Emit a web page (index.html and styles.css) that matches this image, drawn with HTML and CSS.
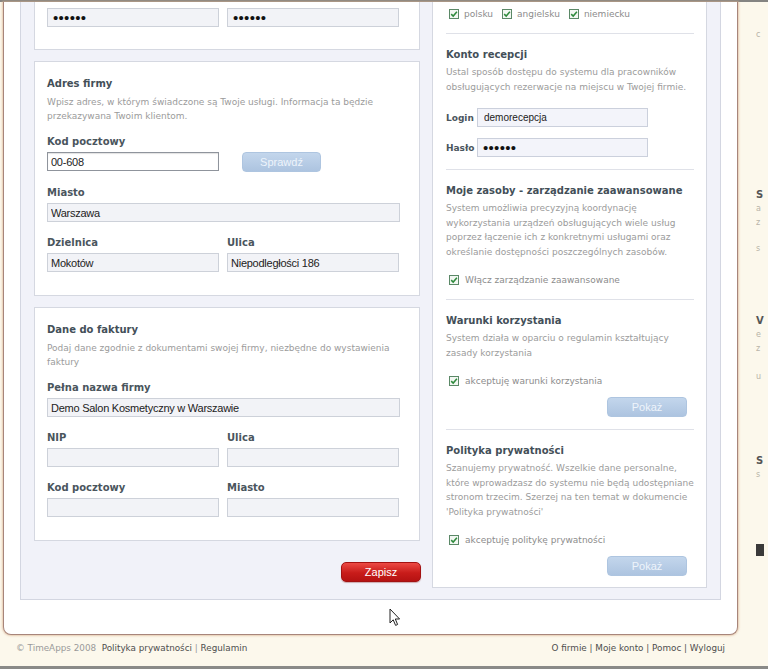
FILE: index.html
```html
<!DOCTYPE html>
<html lang="pl">
<head>
<meta charset="utf-8">
<title>TimeApps – Moje konto</title>
<link rel="stylesheet" href="styles.css">
</head>
<body>
<div class="topline"></div>
<div class="page">
  <div class="card">
    <div class="panel">
      <div class="col-left">
        <div class="sec sec-first">
          <div class="grid2">
            <input class="inp pw" type="password" value="123456">
            <input class="inp pw" type="password" value="123456">
          </div>
        </div>

        <div class="sec">
          <h3>Adres firmy</h3>
          <p class="desc">Wpisz adres, w którym świadczone są Twoje usługi. Informacja ta będzie<br>przekazywana Twoim klientom.</p>
          <div class="field first">
            <label>Kod pocztowy</label>
            <div class="grid2">
              <input class="inp active" type="text" value="00-608">
              <div><button class="btn-blue sprawdz" type="button">Sprawdź</button></div>
            </div>
          </div>
          <div class="field">
            <label>Miasto</label>
            <input class="inp" type="text" value="Warszawa">
          </div>
          <div class="field grid2">
            <div><label>Dzielnica</label><input class="inp" type="text" value="Mokotów"></div>
            <div><label>Ulica</label><input class="inp" type="text" value="Niepodległości 186"></div>
          </div>
        </div>

        <div class="sec">
          <h3>Dane do faktury</h3>
          <p class="desc">Podaj dane zgodnie z dokumentami swojej firmy, niezbędne do wystawienia<br>faktury</p>
          <div class="field first">
            <label>Pełna nazwa firmy</label>
            <input class="inp" type="text" value="Demo Salon Kosmetyczny w Warszawie">
          </div>
          <div class="field grid2">
            <div><label>NIP</label><input class="inp" type="text" value=""></div>
            <div><label>Ulica</label><input class="inp" type="text" value=""></div>
          </div>
          <div class="field grid2">
            <div><label>Kod pocztowy</label><input class="inp" type="text" value=""></div>
            <div><label>Miasto</label><input class="inp" type="text" value=""></div>
          </div>
        </div>

        <div class="actions">
          <button class="btn-red" type="button">Zapisz</button>
        </div>
      </div>

      <div class="col-right">
        <div class="langs">
          <span class="cb-item"><svg class="cb" viewBox="0 0 10 10" width="10" height="10"><rect x=".5" y=".5" width="9" height="9" fill="#f2f7f2" stroke="#5b8867"/><path d="M2.2 5.1 4.2 7.1 7.9 2.7" fill="none" stroke="#2d8a3b" stroke-width="1.5"/></svg>polsku</span>
          <span class="cb-item"><svg class="cb" viewBox="0 0 10 10" width="10" height="10"><rect x=".5" y=".5" width="9" height="9" fill="#f2f7f2" stroke="#5b8867"/><path d="M2.2 5.1 4.2 7.1 7.9 2.7" fill="none" stroke="#2d8a3b" stroke-width="1.5"/></svg>angielsku</span>
          <span class="cb-item"><svg class="cb" viewBox="0 0 10 10" width="10" height="10"><rect x=".5" y=".5" width="9" height="9" fill="#f2f7f2" stroke="#5b8867"/><path d="M2.2 5.1 4.2 7.1 7.9 2.7" fill="none" stroke="#2d8a3b" stroke-width="1.5"/></svg>niemiecku</span>
        </div>
        <div class="sep"></div>

        <h3 class="rh">Konto recepcji</h3>
        <p class="desc rdesc">Ustal sposób dostępu do systemu dla pracowników<br>obsługujących rezerwacje na miejscu w Twojej firmie.</p>
        <div class="login-row first">
          <label>Login</label>
          <input class="inp rinp" type="text" value="demorecepcja">
        </div>
        <div class="login-row">
          <label>Hasło</label>
          <input class="inp rinp pw" type="password" value="123456">
        </div>
        <div class="sep"></div>

        <h3 class="rh">Moje zasoby - zarządzanie zaawansowane</h3>
        <p class="desc rdesc">System umożliwia precyzyjną koordynację<br>wykorzystania urządzeń obsługujących wiele usług<br>poprzez łączenie ich z konkretnymi usługami oraz<br>określanie dostępności poszczególnych zasobów.</p>
        <div class="cb-row"><svg class="cb" viewBox="0 0 10 10" width="10" height="10"><rect x=".5" y=".5" width="9" height="9" fill="#f2f7f2" stroke="#5b8867"/><path d="M2.2 5.1 4.2 7.1 7.9 2.7" fill="none" stroke="#2d8a3b" stroke-width="1.5"/></svg>Włącz zarządzanie zaawansowane</div>
        <div class="sep"></div>

        <h3 class="rh">Warunki korzystania</h3>
        <p class="desc rdesc">System działa w oparciu o regulamin kształtujący<br>zasady korzystania</p>
        <div class="cb-row"><svg class="cb" viewBox="0 0 10 10" width="10" height="10"><rect x=".5" y=".5" width="9" height="9" fill="#f2f7f2" stroke="#5b8867"/><path d="M2.2 5.1 4.2 7.1 7.9 2.7" fill="none" stroke="#2d8a3b" stroke-width="1.5"/></svg>akceptuję warunki korzystania</div>
        <div class="btn-line"><button class="btn-blue pokaz" type="button">Pokaż</button></div>
        <div class="sep"></div>

        <h3 class="rh">Polityka prywatności</h3>
        <p class="desc rdesc">Szanujemy prywatność. Wszelkie dane personalne,<br>które wprowadzasz do systemu nie będą udostępniane<br>stronom trzecim. Szerzej na ten temat w dokumencie<br>'Polityka prywatności'</p>
        <div class="cb-row"><svg class="cb" viewBox="0 0 10 10" width="10" height="10"><rect x=".5" y=".5" width="9" height="9" fill="#f2f7f2" stroke="#5b8867"/><path d="M2.2 5.1 4.2 7.1 7.9 2.7" fill="none" stroke="#2d8a3b" stroke-width="1.5"/></svg>akceptuję politykę prywatności</div>
        <div class="btn-line"><button class="btn-blue pokaz" type="button">Pokaż</button></div>
      </div>
    </div>
  </div>

  <div class="side">
    <p class="s-txt s1">c</p>
    <p class="s-head s2">S</p>
    <p class="s-txt">a</p>
    <p class="s-txt">z</p>
    <p class="s-txt s3">s</p>
    <p class="s-head s4">V</p>
    <p class="s-txt">e</p>
    <p class="s-txt">z</p>
    <p class="s-txt s5">u</p>
    <p class="s-head s6">S</p>
    <p class="s-txt">s</p>
    <div class="s-block"></div>
  </div>
</div>

<footer class="footer">
  <div class="f-left">© TimeApps 2008 &nbsp;<a href="#">Polityka prywatności</a> | <a href="#">Regulamin</a></div>
  <div class="f-right"><a href="#">O firmie</a> | <a href="#">Moje konto</a> | <a href="#">Pomoc</a> | <a href="#">Wyloguj</a></div>
</footer>

<svg class="cursor" width="12" height="19" viewBox="0 0 12 19"><path d="M1 1 L1 15 L4.2 11.8 L6.6 17.4 L8.6 16.5 L6.3 11 L10.6 11 Z" fill="#fff" stroke="#222" stroke-width="1" stroke-linejoin="round"/></svg>
</body>
</html>
```
FILE: styles.css
```css
* { box-sizing: border-box; margin: 0; padding: 0; }

html, body { width: 768px; height: 669px; }

body {
  position: relative;
  overflow: hidden;
  background: #fcf8ec;
  font-family: "DejaVu Sans", Verdana, sans-serif;
  color: #4a545c;
}

.topline { height: 2px; background: #848482; }

.page { display: flex; align-items: flex-start; height: 633px; }

.card {
  flex: none;
  margin-left: 3px;
  width: 735px;
  background: #fff;
  border: 1px solid #a7857b;
  border-top: none;
  border-radius: 0 0 8px 8px;
  padding: 0 16px 34px 16px;
  box-shadow: 0 0 2px 1px rgba(215, 172, 136, 0.6);
}

.panel {
  display: flex;
  align-items: flex-start;
  gap: 12px;
  background: #f1f2f9;
  border: 1px solid #d3d6e1;
  border-top: none;
  padding: 0 13px 11px 13px;
}

/* ---------- left column ---------- */
.col-left { width: 386px; flex: none; display: flex; flex-direction: column; }

.sec {
  background: #fff;
  border: 1px solid #d5d8e1;
  padding: 14px 19px 23px 12px;
  margin-top: 11px;
}
.sec-first { border-top: none; margin-top: 0; padding-top: 6px; padding-bottom: 22px; }

h3 {
  font-size: 10px;
  line-height: 16px;
  font-weight: bold;
  color: #434f58;
}

.desc {
  margin-top: 3px;
  font-size: 9px;
  line-height: 14px;
  color: #9b9b9b;
  white-space: nowrap;
}

.grid2 { display: grid; grid-template-columns: 172px 172px; column-gap: 8px; }

.field { margin-top: 13px; }
.field.first { margin-top: 11px; }

label {
  display: block;
  font-size: 10px;
  line-height: 16px;
  font-weight: bold;
  color: #4a555d;
  margin-bottom: 2px;
}

.inp {
  display: block;
  width: 100%;
  height: 19px;
  border: 1px solid #cdd1d9;
  background: #f2f3f7;
  font-family: "Liberation Sans", Arial, sans-serif;
  font-size: 11px;
  letter-spacing: -0.25px;
  color: #222;
  padding: 0 3px;
  outline: none;
}
.inp.active {
  background: #fff;
  border-color: #8f949c;
  box-shadow: inset 0 1px 1px rgba(0, 0, 0, 0.12);
}
.inp.pw { font-size: 15px; color: #111; padding-left: 5px; letter-spacing: 0.3px; }

.btn-blue {
  display: block;
  width: 80px;
  height: 20px;
  border: 1px solid #aec5e0;
  border-radius: 4px;
  background: linear-gradient(#c3d6ec, #adc4e0);
  color: #eef4fb;
  font-family: "Liberation Sans", Arial, sans-serif;
  font-size: 11px;
}
.sprawdz { margin-left: 15px; width: 79px; }

.actions { display: flex; justify-content: flex-end; margin-top: 21px; margin-right: -1px; }

.btn-red {
  width: 80px;
  height: 20px;
  border: 1px solid #a31212;
  border-radius: 5px;
  background: linear-gradient(#ec4a44, #c81c1a 55%, #b51212);
  color: #fff;
  font-family: "Liberation Sans", Arial, sans-serif;
  font-size: 11px;
  box-shadow: 0 1px 1px rgba(120, 0, 0, 0.3);
}

/* ---------- right column ---------- */
.col-right {
  width: 275px;
  flex: none;
  background: #fff;
  border: 1px solid #d5d8e1;
  border-top: none;
  padding: 5px 12px 11px 13px;
}

.langs {
  display: flex;
  gap: 9px;
  height: 14px;
  margin-left: 3px;
  align-items: center;
}
.cb-item, .cb-row {
  display: flex;
  align-items: center;
  gap: 5px;
  font-size: 9px;
  color: #8c8c8c;
  white-space: nowrap;
}
.cb { flex: none; display: block; }

.cb-row { height: 14px; margin: 14px 0 0 3px; gap: 6px; }

.sep { height: 1px; background: #dfe1e8; margin-top: 12px; }

.rh { margin-top: 13px; }
.rdesc { margin-top: 2px; line-height: 14.5px; }

.login-row { display: flex; align-items: center; margin-top: 11px; }
.login-row.first { margin-top: 14px; }
.login-row label { width: 31px; margin: 0; flex: none; font-size: 9px; }
.rinp {
  width: 171px;
  background: #f3f4fa;
  border-color: #cbd0dc;
  font-size: 10px;
  letter-spacing: 0;
  padding-left: 6px;
}
.rinp.pw { font-size: 15px; padding-left: 5px; }

.btn-line { display: flex; justify-content: flex-end; margin: 9px 7px 0 0; }

/* ---------- clipped sidebar ---------- */
.side {
  width: 30px;
  flex: none;
  height: 633px;
  overflow: hidden;
  padding-left: 18px;
}
.s-txt { font-size: 8px; line-height: 14px; color: #b8b4a8; }
.s-head { font-size: 10px; line-height: 14px; font-weight: bold; color: #555; }
.s1 { margin-top: 26px; }
.s2 { margin-top: 146px; }
.s3 { margin-top: 12px; }
.s4 { margin-top: 58px; }
.s5 { margin-top: 14px; }
.s6 { margin-top: 70px; }
.s-block { width: 8px; height: 12px; background: #3a3a3a; margin-top: 62px; }

/* ---------- footer ---------- */
.footer {
  display: flex;
  justify-content: space-between;
  align-items: flex-start;
  height: 34px;
  padding: 8px 43px 0 16px;
  font-size: 8.8px;
  line-height: 10px;
  color: #9a9a9a;
  border-bottom: 3px solid #8a8a88;
}
.footer a { color: #4e4e4e; text-decoration: none; }
.f-right { color: #555; }

.cursor { position: absolute; left: 389px; top: 608px; }
```
